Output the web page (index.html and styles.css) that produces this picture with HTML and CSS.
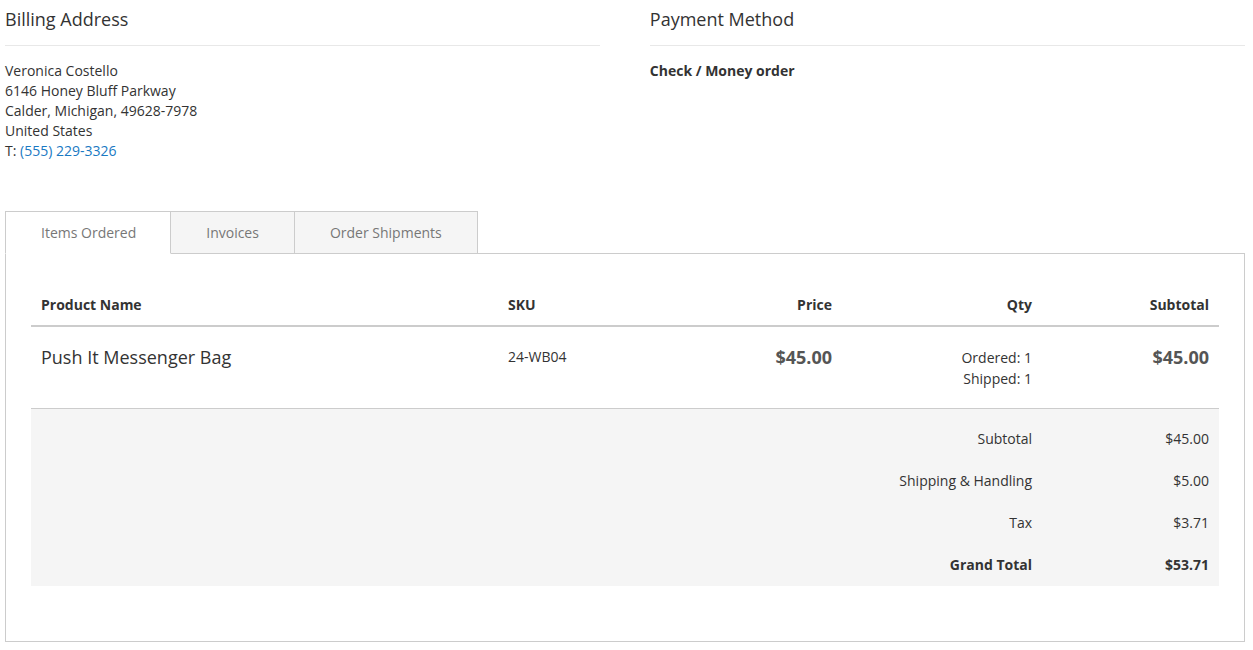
FILE: index.html
```html
<!DOCTYPE html>
<html lang="en">
<head>
    <meta charset="UTF-8">
    <meta name="viewport" content="width=device-width, initial-scale=1.0">
    <title>Order View</title>
    <link rel="stylesheet" href="styles.css">
</head>
<body>
    <main class="page">
        <section class="order-info">
            <div class="box">
                <h2 class="box-title">Billing Address</h2>
                <address class="box-content">
                    Veronica Costello<br>
                    6146 Honey Bluff Parkway<br>
                    Calder, Michigan, 49628-7978<br>
                    United States<br>
                    T: <a href="#">(555) 229-3326</a>
                </address>
            </div>
            <div class="box">
                <h2 class="box-title">Payment Method</h2>
                <div class="box-content">
                    <strong>Check / Money order</strong>
                </div>
            </div>
        </section>

        <section class="order-items">
            <nav class="tabs">
                <a class="tab active" href="#">Items Ordered</a>
                <a class="tab" href="#">Invoices</a>
                <a class="tab" href="#">Order Shipments</a>
            </nav>
            <div class="tab-content">
                <table class="items-table">
                    <colgroup>
                        <col class="col-name">
                        <col class="col-sku">
                        <col class="col-price">
                        <col class="col-qty">
                        <col class="col-subtotal">
                    </colgroup>
                    <thead>
                        <tr>
                            <th class="left">Product Name</th>
                            <th class="left">SKU</th>
                            <th>Price</th>
                            <th>Qty</th>
                            <th>Subtotal</th>
                        </tr>
                    </thead>
                    <tbody>
                        <tr>
                            <td class="left product-name">Push It Messenger Bag</td>
                            <td class="left">24-WB04</td>
                            <td class="price">$45.00</td>
                            <td class="qty">
                                <span>Ordered: 1</span>
                                <span>Shipped: 1</span>
                            </td>
                            <td class="price">$45.00</td>
                        </tr>
                    </tbody>
                    <tfoot>
                        <tr>
                            <th colspan="4">Subtotal</th>
                            <td>$45.00</td>
                        </tr>
                        <tr>
                            <th colspan="4">Shipping &amp; Handling</th>
                            <td>$5.00</td>
                        </tr>
                        <tr>
                            <th colspan="4">Tax</th>
                            <td>$3.71</td>
                        </tr>
                        <tr class="grand-total">
                            <th colspan="4">Grand Total</th>
                            <td>$53.71</td>
                        </tr>
                    </tfoot>
                </table>
            </div>
        </section>
    </main>
</body>
</html>
```

FILE: styles.css
```css
body {
    margin: 0;
    font-family: "Open Sans", "Liberation Sans", sans-serif;
    font-size: 14px;
    line-height: 20px;
    color: #333;
    background: #fff;
}

.page {
    padding: 6px 8px 0 5px;
}

/* address / payment boxes */
.order-info {
    display: flex;
    justify-content: space-between;
}

.box {
    width: 48%;
}

.box-title {
    margin: 0 0 15px;
    padding-bottom: 13px;
    border-bottom: 1px solid #e8e8e8;
    font-size: 18px;
    font-weight: 400;
    line-height: 26px;
}

.box-content {
    font-style: normal;
}

.box-content a {
    color: #1979c3;
    text-decoration: none;
}

/* tabs */
.order-items {
    margin-top: 50px;
}

.tabs {
    display: flex;
}

.tab {
    position: relative;
    margin: 0 -1px -1px 0;
    padding: 11px 35px 10px;
    background: #f5f5f5;
    border: 1px solid #ccc;
    color: #777;
    text-decoration: none;
}

.tab.active {
    z-index: 1;
    padding-right: 34px;
    background: #fff;
    border-bottom-color: #fff;
}

.tab-content {
    border: 1px solid #ccc;
    padding: 29px 25px 55px;
}

/* items table */
.items-table {
    width: 100%;
    table-layout: fixed;
    border-collapse: collapse;
}

.col-name { width: 467px; }
.col-sku { width: 172px; }
.col-price { width: 172px; }
.col-qty { width: 200px; }
.col-subtotal { width: 177px; }

.items-table th,
.items-table td {
    padding: 11px 10px;
    text-align: right;
    vertical-align: top;
}

.items-table .left {
    text-align: left;
}

.items-table thead th {
    padding: 12px 10px 10px;
    font-weight: 700;
    border-bottom: 2px solid #ccc;
}

.items-table tbody td {
    padding: 20px 10px 19px;
    border-bottom: 1px solid #ccc;
}

.product-name {
    font-size: 18px;
}

.price {
    font-size: 18px;
    font-weight: 700;
    color: #555;
}

.qty span {
    display: block;
    line-height: 21px;
}

.items-table tfoot {
    background: #f5f5f5;
}

.items-table tfoot th {
    font-weight: 400;
}

.items-table tfoot tr:first-child th,
.items-table tfoot tr:first-child td {
    padding-top: 20px;
}

.items-table tfoot tr:last-child th,
.items-table tfoot tr:last-child td {
    padding-bottom: 11px;
}

.items-table tfoot .grand-total th,
.items-table tfoot .grand-total td {
    font-weight: 700;
}
```
